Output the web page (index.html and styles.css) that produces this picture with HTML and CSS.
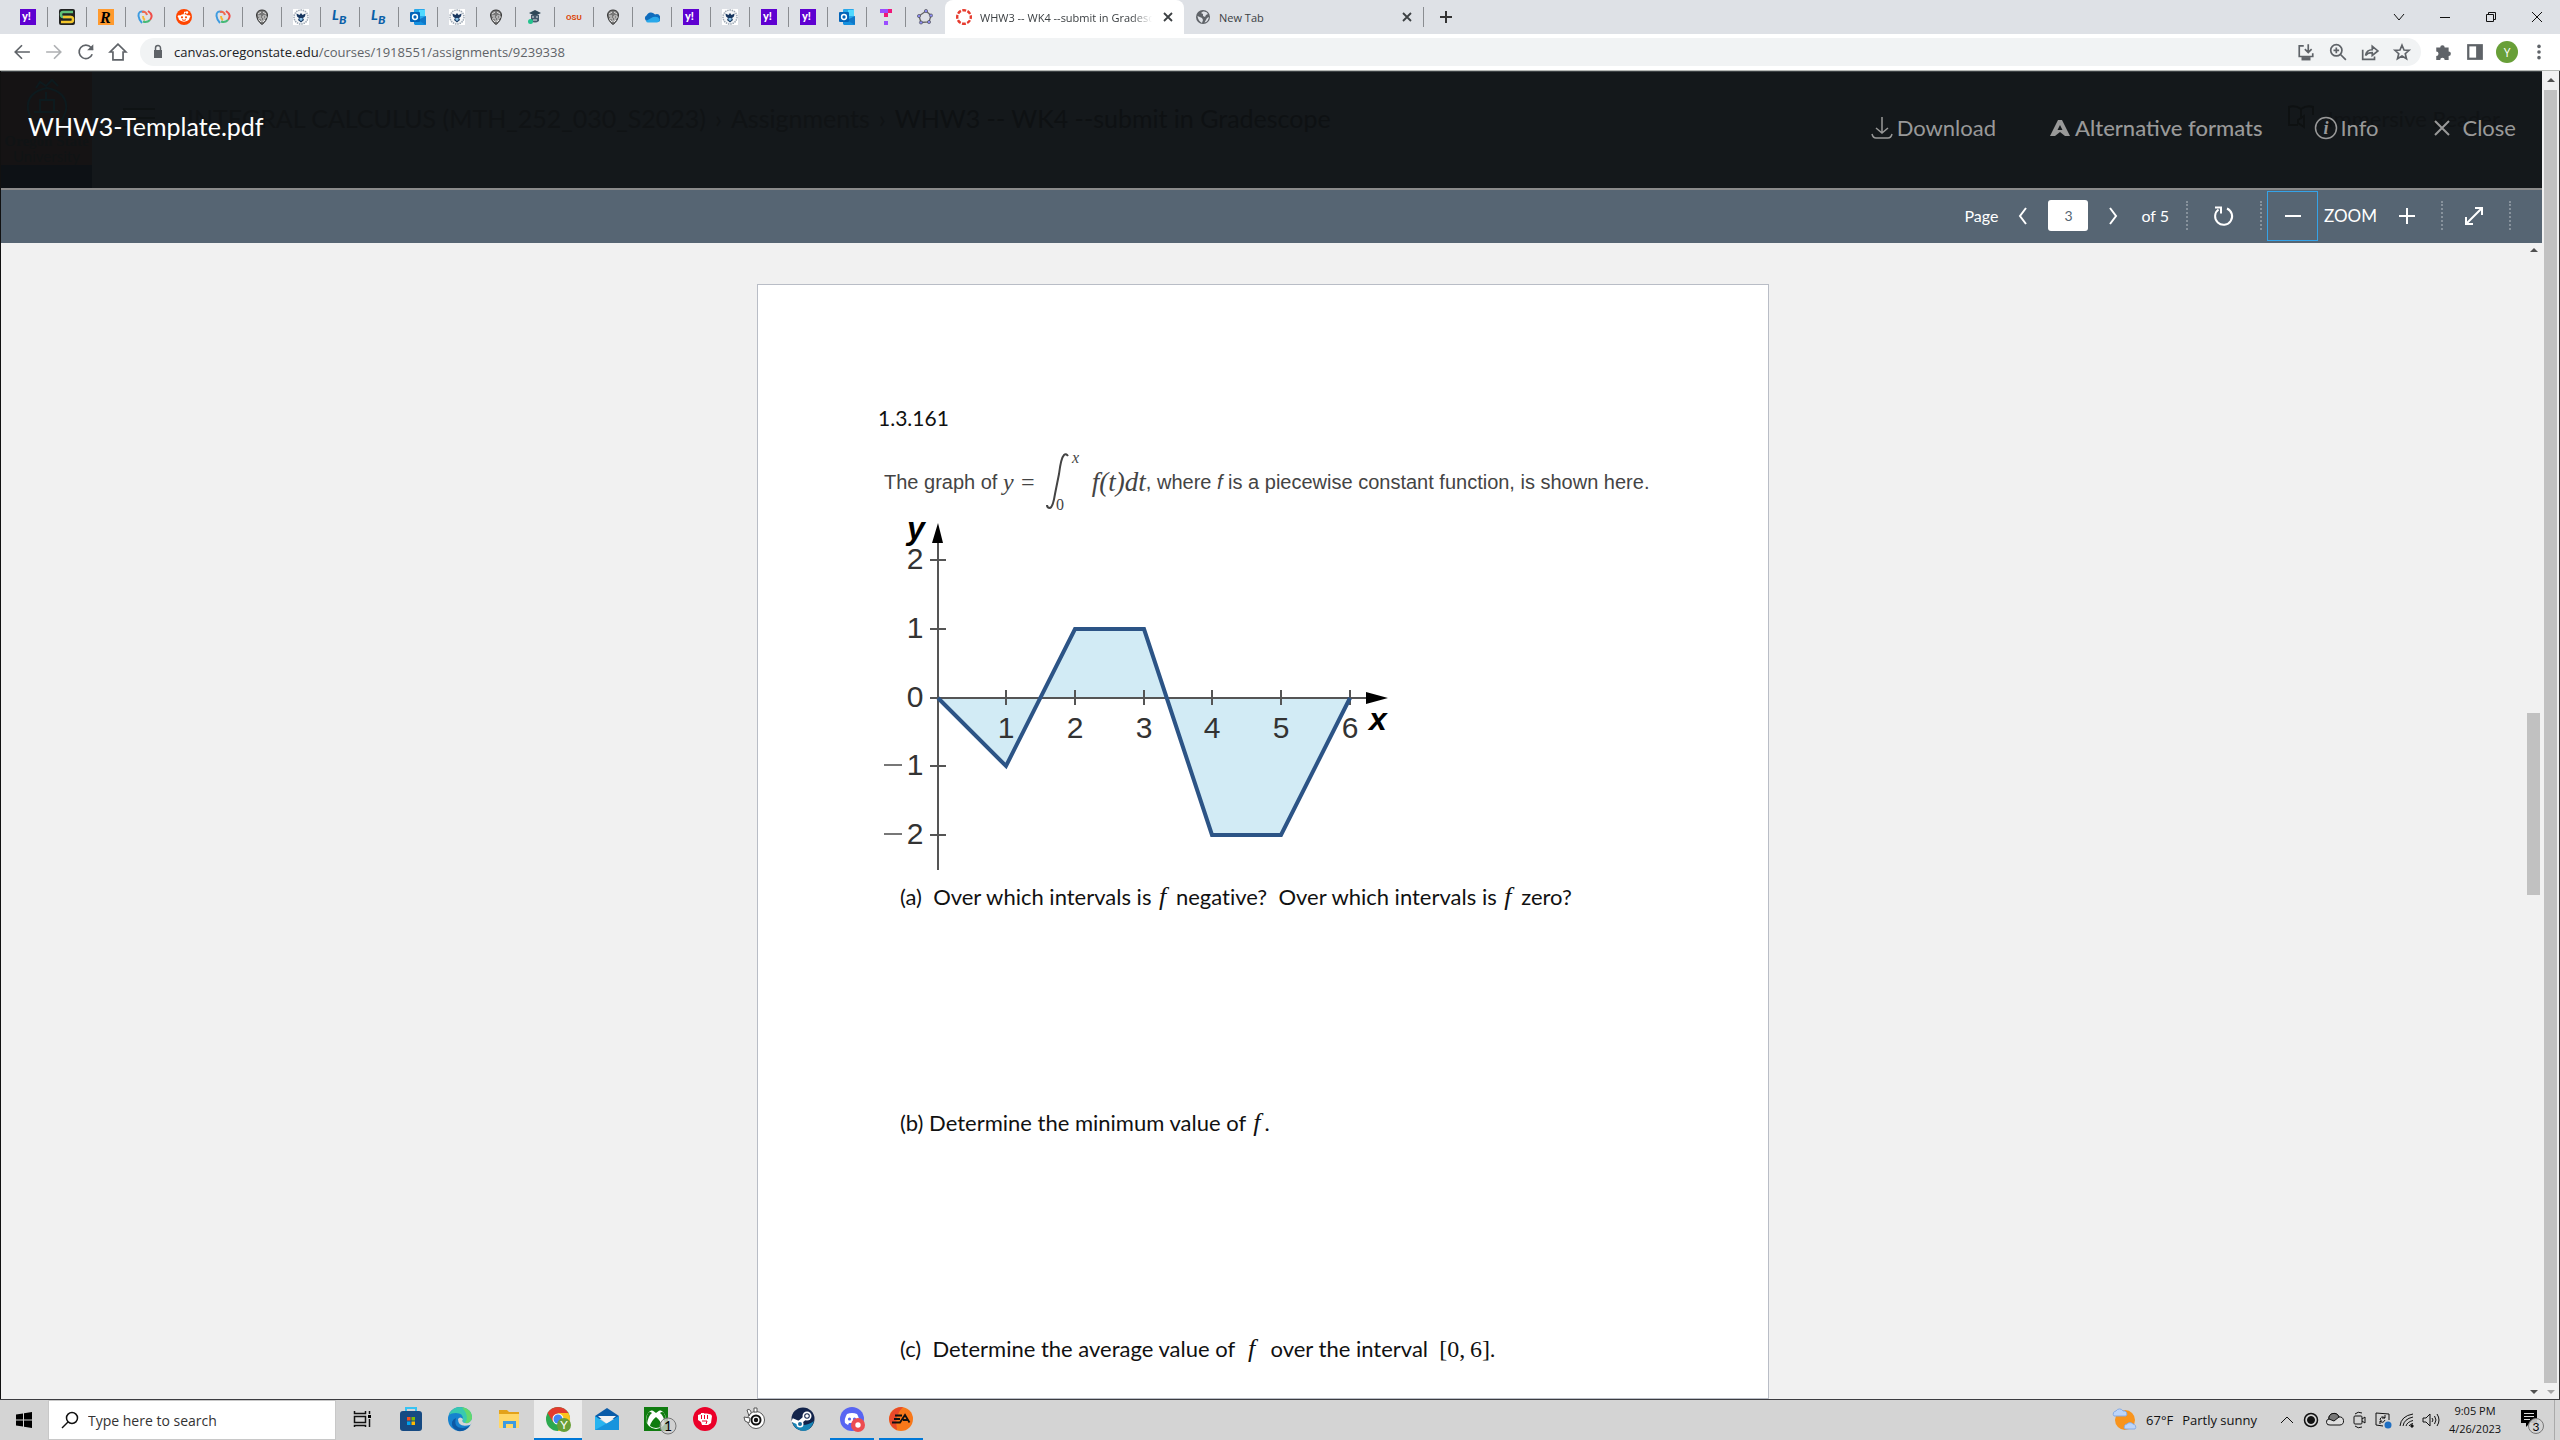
FILE: index.html
```html
<!DOCTYPE html>
<html lang="en">
<head>
<meta charset="utf-8">
<title>WHW3 -- WK4 --submit in Gradescope</title>
<link rel="stylesheet" href="styles.css">
</head>
<body>
<svg class="sprite" aria-hidden="true">
  <symbol id="f-yahoo" viewBox="0 0 16 16"><rect width="16" height="16" fill="#5f01d1"/><text x="2" y="11" class="logo-y" fill="#fff">y!</text></symbol>
  <symbol id="f-s" viewBox="0 0 16 16"><rect width="16" height="16" rx="2" fill="#222"/><path d="M14 3H4Q2 3 2 5.500T4 8H12" fill="none" stroke="#5fbf77" stroke-width="2.500"/><path d="M4 8H12Q14 8 14 10.500T12 13H2" fill="none" stroke="#f3c62c" stroke-width="2.500"/></symbol>
  <symbol id="f-r" viewBox="0 0 16 16"><rect width="16" height="16" fill="#ff9a2e"/><text x="2" y="14" class="logo-r">R</text></symbol>
  <symbol id="f-swirl" viewBox="0 0 16 16" fill="none" stroke-width="2"><path d="M8 3Q1 1 1.500 7Q2 11 5 14" stroke="#3e9be0"/><path d="M5 3Q9 2 10 6" stroke="#f0684e"/><path d="M11 2Q17 6 13 11" stroke="#ef4e4a"/><path d="M6 7Q6 10 8 11" stroke="#f7b733"/><path d="M13 11Q10 14 6 12.500" stroke="#46b978"/></symbol>
  <symbol id="f-reddit" viewBox="0 0 16 16"><circle cx="8" cy="8" r="8" fill="#ff4500"/><ellipse cx="8" cy="9" rx="5.500" ry="3.700" fill="#fff"/><circle cx="3" cy="7.500" r="1.300" fill="#fff"/><circle cx="13" cy="7.500" r="1.300" fill="#fff"/><circle cx="11" cy="3.500" r="1.200" fill="#fff"/><path d="M8 6L8.600 3L11 3.500" stroke="#fff" fill="none"/><circle cx="6" cy="8.300" r="1.100" fill="#ff4500"/><circle cx="10" cy="8.300" r="1.100" fill="#ff4500"/><path d="M6 10.700Q8 12 10 10.700" stroke="#ff4500" fill="none"/></symbol>
  <symbol id="f-crest" viewBox="0 0 16 16"><path d="M8 1Q13 1 13.500 6Q13 12 8 15.500Q3 12 2.500 6Q3 1 8 1Z" fill="#777" stroke="#333"/><path d="M4 5L7 3M9 3L12 5M4 7H7M9 7H12V9H9ZM5 9V11L7 13V9ZM9 11H11L9 13Z" stroke="#eee" fill="#333" stroke-width=".9"/></symbol>
  <symbol id="f-eagle" viewBox="0 0 16 16"><rect width="16" height="16" fill="#fff"/><circle cx="8" cy="8" r="7" fill="#f4f6f8" stroke="#9fa9b5" stroke-width="1.500" stroke-dasharray="1.500 .8"/><path d="M3.500 4.500L6.500 6L8 4L9.500 6L12.500 4.500Q12.500 8 10 9L11 11L8 13.500L5 11L6 9Q3.500 8 3.500 4.500Z" fill="#17365f"/><path d="M6.500 9H9.500V11L8 12L6.500 11Z" fill="#8ac1e6"/></symbol>
  <symbol id="f-lb" viewBox="0 0 16 16"><text x="0" y="11" class="logo-lb">L</text><text x="7" y="15" class="logo-lb small">B</text></symbol>
  <symbol id="f-outlook" viewBox="0 0 16 16"><rect x="4" y="0" width="11" height="10" rx="1" fill="#28a8ea"/><rect x="9" y="1" width="6" height="6" fill="#50d9ff"/><path d="M4 8L10 12L16 7V15Q16 16 15 16H5L4 15Z" fill="#1490df"/><path d="M16 7V16L8 11Z" fill="#0f78c8"/><rect x="0" y="3" width="10" height="10" rx="1" fill="#0364b8"/><circle cx="5" cy="8" r="2.400" fill="none" stroke="#fff" stroke-width="1.500"/></symbol>
  <symbol id="f-grad" viewBox="0 0 16 16"><path d="M2 4L8 1L14 4L8 7Z" fill="#2f4858"/><path d="M4 6H12V12Q8 15 4 12Z" fill="#44596b"/><path d="M5 8H7M9 8H11M6 11H10" stroke="#dfe6ea"/><circle cx="3.500" cy="12.500" r="2.500" fill="#23c38e"/></symbol>
  <symbol id="f-osu" viewBox="0 0 16 16"><text x="0" y="11" class="logo-osu">OSU</text></symbol>
  <symbol id="f-cloud" viewBox="0 0 16 16"><path d="M3 12A3 3 0 0 1 2.500 6.500A5 5 0 0 1 11 5.500A4 4 0 0 1 14 13H3Z" fill="#0f6cbd"/><path d="M2 12L9 8Q14 7 15.500 10Q16.500 13 13 13.500H4Q2.500 13.500 2 12Z" fill="#28a8ea"/></symbol>
  <symbol id="f-t" viewBox="0 0 16 16"><rect x="2" width="8" height="4" fill="#9a4dff"/><rect x="10" width="4" height="4" fill="#f0187a"/><rect x="6" y="4" width="4" height="4" fill="#f0187a"/><rect x="6" y="12" width="4" height="4" fill="#9a4dff"/></symbol>
  <symbol id="f-penta" viewBox="0 0 16 16"><path d="M9 2L14 6.500L12 13L4 13.500L2 7Z" fill="none" stroke="#666" stroke-width="1.300"/><g fill="#8d8df5" stroke="#444" stroke-width=".6"><circle cx="9" cy="2" r="1.600"/><circle cx="14" cy="6.500" r="1.600"/><circle cx="12" cy="13" r="1.600"/><circle cx="4" cy="13.500" r="1.600"/><circle cx="2" cy="7" r="1.600"/></g></symbol>
  <symbol id="f-canvas" viewBox="0 0 16 16"><circle cx="8" cy="8" r="6.800" fill="none" stroke="#e63b2e" stroke-width="2.400" stroke-dasharray="3.900 1.440" stroke-dashoffset="1.950"/></symbol>
  <symbol id="f-globe" viewBox="0 0 16 16"><circle cx="8" cy="8" r="7" fill="#5f6368"/><path d="M8 2.500Q12 2 13 5L11 6L10 8L8 7V5L6 4ZM2.500 7L7 9L8 11L7 14Q3 12 2.500 7ZM12 9L14 8Q13 13 9.500 13.500Z" fill="#dee1e6"/></symbol>
  <symbol id="i-x" viewBox="0 0 16 16"><path d="M4 4L12 12M12 4L4 12" stroke="currentColor" stroke-width="1.800" fill="none"/></symbol>
</svg>

<nav class="tabs" aria-label="Tabs">
  <div class="pinned">
    <svg><use href="#f-yahoo"/></svg><svg><use href="#f-s"/></svg><svg><use href="#f-r"/></svg><svg><use href="#f-swirl"/></svg><svg><use href="#f-reddit"/></svg><svg><use href="#f-swirl"/></svg><svg><use href="#f-crest"/></svg><svg><use href="#f-eagle"/></svg><svg><use href="#f-lb"/></svg><svg><use href="#f-lb"/></svg><svg><use href="#f-outlook"/></svg><svg><use href="#f-eagle"/></svg><svg><use href="#f-crest"/></svg><svg><use href="#f-grad"/></svg><svg><use href="#f-osu"/></svg><svg><use href="#f-crest"/></svg><svg><use href="#f-cloud"/></svg><svg><use href="#f-yahoo"/></svg><svg><use href="#f-eagle"/></svg><svg><use href="#f-yahoo"/></svg><svg><use href="#f-yahoo"/></svg><svg><use href="#f-outlook"/></svg><svg><use href="#f-t"/></svg><svg><use href="#f-penta"/></svg>
  </div>
  <div class="tab active"><svg class="fav"><use href="#f-canvas"/></svg><span class="tab-title">WHW3 -- WK4 --submit in Gradescope</span><button aria-label="Close tab"><svg class="fav"><use href="#i-x"/></svg></button></div>
  <div class="tab"><svg class="fav"><use href="#f-globe"/></svg><span class="tab-title">New Tab</span><button aria-label="Close tab"><svg class="fav"><use href="#i-x"/></svg></button></div>
  <button class="new-tab" aria-label="New tab"><svg width="16" height="16" viewBox="0 0 16 16"><path d="M8 2V14M2 8H14" stroke="#333" stroke-width="2"/></svg></button>
  <div class="win">
    <button aria-label="Search tabs"><svg width="12" height="12" viewBox="0 0 12 12"><path d="M1 3L6 9L11 3"/></svg></button>
    <button aria-label="Minimize"><svg width="12" height="12" viewBox="0 0 12 12"><path d="M1 6.500H11"/></svg></button>
    <button aria-label="Restore"><svg width="12" height="12" viewBox="0 0 12 12"><path d="M1.500 3.500H8.500V10.500H1.500ZM3.500 3.500V1.500H10.500V8.500H8.500"/></svg></button>
    <button aria-label="Close"><svg width="12" height="12" viewBox="0 0 12 12"><path d="M1 1L11 11M11 1L1 11"/></svg></button>
  </div>
</nav>

<div class="bar">
  <div class="nav-buttons">
    <button aria-label="Back"><svg viewBox="0 0 16 16"><path d="M15 8H2M8 2L2 8L8 14"/></svg></button>
    <button aria-label="Forward" class="off"><svg viewBox="0 0 16 16"><path d="M1 8H14M8 2L14 8L8 14"/></svg></button>
    <button aria-label="Reload"><svg viewBox="0 0 16 16"><path d="M13.500 10A6 6 0 1 1 12.500 4L14 6"/><path d="M14.500 1V6.500H9Z" fill="#5f6368" stroke="none"/></svg></button>
    <button aria-label="Home"><svg viewBox="0 0 16 16"><path d="M8 1L1 8H3.500V15H12.500V8H15Z"/></svg></button>
  </div>
  <div class="address">
    <svg class="lock" width="16" height="16" viewBox="0 0 16 16"><rect x="4" y="6" width="8" height="8" fill="#5f6368"/><path d="M5.500 6V4A2.500 2.500 0 0 1 10.500 4V6" fill="none" stroke="#5f6368" stroke-width="1.500"/></svg>
    <span class="url"><b>canvas.oregonstate.edu</b>/courses/1918551/assignments/9239338</span>
    <span class="address-tools">
      <button aria-label="Install"><svg viewBox="0 0 16 16"><path d="M6 2.500H2V12H14V9M10 1V8M7 5.500L10 8.500L13 5.500"/><path d="M4 14H12" stroke-width="3"/></svg></button>
      <button aria-label="Zoom"><svg viewBox="0 0 16 16"><circle cx="6.500" cy="6.500" r="5"/><path d="M10 10L15 15M4 6.500H9M6.500 4V9"/></svg></button>
      <button aria-label="Share"><svg viewBox="0 0 16 16"><path d="M1.500 6V14.500H12V12M4 11Q5 6 10 6V3L15 7L10 11V8.500Q6 8.500 4 11Z"/></svg></button>
      <button aria-label="Bookmark"><svg viewBox="0 0 16 16"><path d="M8 2L9.800 6.200L14.300 6.500L10.900 9.500L12 14L8 11.500L4 14L5.100 9.500L1.700 6.500L6.200 6.200Z"/></svg></button>
    </span>
  </div>
  <div class="bar-tools">
    <button aria-label="Extensions"><svg viewBox="0 0 16 16"><path d="M2 4H5.500A2 2 0 1 1 9.500 4H13V7.500A2 2 0 1 1 13 11.500V15H9.500A2 2 0 0 0 5.500 15H2V11.500A2 2 0 0 0 2 7.500Z" fill="#5f6368" stroke="none"/></svg></button>
    <button aria-label="Side panel"><svg viewBox="0 0 16 16"><rect x="2" y="2" width="12" height="12" stroke-width="2"/><rect x="9" y="2" width="5" height="12" fill="#5f6368" stroke="none"/></svg></button>
    <button class="avatar" aria-label="Profile">Y</button>
    <button aria-label="Menu"><svg viewBox="0 0 16 16"><g fill="#5f6368" stroke="none"><circle cx="8" cy="3" r="1.600"/><circle cx="8" cy="8" r="1.600"/><circle cx="8" cy="13" r="1.600"/></g></svg></button>
  </div>
</div>

<div class="content">
  <main class="preview">
    <header class="head">
      <div class="under" aria-hidden="true">
        <div class="brand"><svg width="42" height="56" viewBox="0 0 42 56"><path d="M21 10Q42 14 40 32Q36 48 21 52Q6 48 2 32Q0 14 21 10ZM10 10L14 4L20 8L26 2L32 8M8 34H34M14 34V22H28V34M20 22V14" fill="none" stroke="#0d1a1e" stroke-width="2"/></svg><strong>Oregon State</strong><span>University</span></div>
        <svg class="burger" width="32" height="24" viewBox="0 0 32 24"><path d="M0 3H32M0 12H32M0 21H32" stroke="#0f1314" stroke-width="2"/></svg>
        <span class="crumb">INTEGRAL CALCULUS (MTH_252_030_S2023)</span><span class="crumb chev">›</span><span class="crumb">Assignments</span><span class="crumb chev">›</span><span class="crumb last">WHW3 -- WK4 --submit in Gradescope</span>
        <span class="reader"><svg width="26" height="24" viewBox="0 0 26 24"><path d="M13 4Q7 0 1 2V20H10M13 4Q19 0 25 2V10M13 4V14M10 15L16 11V22L10 18Z" fill="none" stroke="#0e1112" stroke-width="2"/></svg>Immersive Reader</span>
      </div>
      <h1>WHW3-Template.pdf</h1>
      <div class="actions">
        <a href="#" class="download"><svg width="24" height="24" viewBox="0 0 24 24"><path d="M12 1V17M6 12L12 17L18 12M2 18Q3 22 6 22H18Q21 22 22 18"/></svg>Download</a>
        <a href="#" class="alt"><svg width="24" height="24" viewBox="0 0 24 24"><path d="M10 4H14L22 20H17L12 16L7 20H2ZM12 9L9.500 14H14.500Z" fill="#999" fill-rule="evenodd" stroke="none"/></svg>Alternative formats</a>
        <a href="#" class="info"><svg width="24" height="24" viewBox="0 0 24 24"><circle cx="12" cy="12" r="10.500"/><text x="12" y="18" class="info-i" text-anchor="middle">i</text></svg>Info</a>
        <button class="close"><svg width="16" height="16" viewBox="0 0 16 16"><path d="M1 1L15 15M15 1L1 15" stroke-width="2"/></svg>Close</button>
      </div>
    </header>

    <div class="tools">
      <label for="page-no">Page</label>
      <button class="step" aria-label="Previous page"><svg width="12" height="18" viewBox="0 0 12 18"><path d="M9 1L3 9L9 17"/></svg></button>
      <input id="page-no" type="text" value="3">
      <button class="step" aria-label="Next page"><svg width="12" height="18" viewBox="0 0 12 18"><path d="M3 1L9 9L3 17"/></svg></button>
      <span class="total">of 5</span>
      <button class="rotate" aria-label="Rotate"><svg width="22" height="22" viewBox="0 0 22 22"><path d="M14 3.500A8.500 8.500 0 1 1 5.500 4.500M2 2.500H8V8.500"/></svg></button>
      <button class="minus" aria-label="Zoom out"><svg width="16" height="16" viewBox="0 0 16 16"><path d="M0 8H16"/></svg></button>
      <span class="zoom">ZOOM</span>
      <button class="plus" aria-label="Zoom in"><svg width="16" height="16" viewBox="0 0 16 16"><path d="M0 8H16M8 0V16"/></svg></button>
      <button class="full" aria-label="Full screen"><svg width="20" height="20" viewBox="0 0 20 20"><path d="M2 18L18 2M11 2H18V9M2 11V18H9"/></svg></button>
    </div>

    <div class="viewer">
      <article class="sheet">
        <p class="number">1.3.161</p>
        <p class="formula">The graph of <span class="m">y =</span><svg class="integral" width="40" height="64" viewBox="0 0 40 64"><path d="M26 6Q24 3 22 5Q19 8 17 24L13 44Q11 57 8 58Q5 58 5 55" fill="none" stroke="#444" stroke-width="2"/><text x="30" y="13" class="lim it">x</text><text x="14" y="60" class="lim">0</text></svg><i class="m big">f(t)dt</i><span>, where <i>f</i> is a piecewise constant function, is shown here.</span></p>
        <svg class="plot" width="520" height="364" viewBox="878 512 520 364" role="img" aria-label="Graph of y against x">
          <path d="M938 698L1006 766L1041 698L1075 629H1144L1167 698L1212 835H1281L1350 698Z" fill="#d2ebf5"/>
          <path d="M938 530V870M930 698H1370M930 560H946M930 629H946M930 766H946M930 835H946M1006 690V705M1075 690V705M1144 690V705M1212 690V705M1281 690V705M1350 690V705" fill="none" stroke="#555" stroke-width="2"/>
          <path d="M938 698L1006 766L1075 629H1144L1212 835H1281L1350 698" fill="none" stroke="#2c5486" stroke-width="4"/>
          <path d="M938 523L943 543H932ZM1388 698L1366 692V704Z" fill="#000"/>
          <g class="ticks"><text x="915" y="569">2</text><text x="915" y="638">1</text><text x="915" y="707">0</text><text x="915" y="775">1</text><text x="915" y="844">2</text><text x="1006" y="738">1</text><text x="1075" y="738">2</text><text x="1144" y="738">3</text><text x="1212" y="738">4</text><text x="1281" y="738">5</text><text x="1350" y="738">6</text></g>
          <path d="M884 765H902M884 834H902" stroke="#777" stroke-width="2"/>
          <g class="axis"><text x="916" y="539">y</text><text x="1378" y="730">x</text></g>
        </svg>
        <p class="q">(a)&nbsp; Over which intervals is <i>f</i> negative?&nbsp; Over which intervals is <i>f</i> zero?</p>
        <p class="q">(b) Determine the minimum value of <i>f</i>.</p>
        <p class="q">(c)&nbsp; Determine the average value of &nbsp;<i>f</i>&nbsp; over the interval &nbsp;<span class="set">[0,&#8201;6]</span>.</p>
      </article>
      <div class="scroll inner" aria-hidden="true"><i class="up-arrow"></i><span class="gap-a"></span><span class="thumb"></span><span class="gap-b"></span><i class="down-arrow"></i></div>
    </div>
  </main>
  <div class="scroll outer" aria-hidden="true"><i class="up-arrow"></i><span class="thumb"></span><i class="down-arrow pale"></i></div>
</div>

<footer class="taskbar">
  <button class="start" aria-label="Start"><svg width="16" height="16" viewBox="0 0 16 16"><path d="M0 2.500L7 1.500V7.500H0ZM8 1.300L16 0V7.500H8ZM0 8.500H7V14.500L0 13.500ZM8 8.500H16V16L8 14.700Z"/></svg></button>
  <label class="search"><svg width="18" height="18" viewBox="0 0 18 18"><circle cx="11" cy="7" r="5.500"/><path d="M7 11L1 17"/></svg><input type="text" placeholder="Type here to search" aria-label="Search"></label>
  <div class="apps">
    <button aria-label="Task view"><svg viewBox="0 0 24 24"><path d="M4.500 4V6.500H15.500V4M4.500 9.500H15.500V15.500H4.500ZM4.500 20V18.500H15.500V20M19.500 4V7M19.500 12V20" fill="none" stroke="#111" stroke-width="1.500"/><path d="M18 8H21V11H18Z"/></svg></button>
    <button aria-label="Store"><svg viewBox="0 0 24 24"><path d="M7 5V1H17V5" fill="none" stroke="#37c3f3" stroke-width="2"/><rect x="1" y="4" width="22" height="20" rx="3" fill="#164a82"/><path d="M8 10H11.500V13.500H8Z" fill="#f25022"/><path d="M12.500 10H16V13.500H12.500Z" fill="#7fba00"/><path d="M8 14.500H11.500V18H8Z" fill="#00a4ef"/><path d="M12.500 14.500H16V18H12.500Z" fill="#ffb900"/></svg></button>
    <button aria-label="Edge"><svg viewBox="0 0 24 24"><circle cx="12" cy="12" r="12" fill="#1682cf"/><path d="M1 8Q4 0 12 0Q24 1 24 11Q23 17 17 16Q13 15 15 12Q15 6 8 6Q3 6 1 8Z" fill="#38c9b0"/><path d="M14 0Q24 2 24 11Q23 17 17 16Q22 10 14 0Z" fill="#64d86b"/><path d="M8 11Q5 21 15 21Q19 21 22 18Q18 25 10 24Q3 21 4 15Q5 12 8 11Z" fill="#0c59a4"/><path d="M15 12Q13 15 17 16Q22 17 24 12Q25 16 22 18Q10 21 10 12Q12 9 15 12Z" fill="#d5d5d5"/></svg></button>
    <button aria-label="File Explorer"><svg viewBox="0 0 24 24"><path d="M2 3H10L12 5H22V21H2Z" fill="#e3a21a"/><path d="M2 7H22V21H2Z" fill="#ffd767"/><path d="M6 21V14H19V21H16V17H9V21Z" fill="#3d9be0"/></svg></button>
    <button aria-label="Chrome" class="current"><svg viewBox="0 0 24 24"><circle cx="12" cy="12" r="12" fill="#2da94f"/><path d="M1.600 6A12 12 0 0 1 22.400 6H12L7 15Z" fill="#e33b2e"/><path d="M22.400 6A12 12 0 0 1 12 24L17 14L12 6Z" fill="#fcc31e"/><circle cx="12" cy="12" r="5.500" fill="#fff"/><circle cx="12" cy="12" r="4.500" fill="#4285f4"/><circle cx="18" cy="18" r="7" fill="#689f38"/><text x="18" y="22" class="mini" fill="#fff" text-anchor="middle">Y</text></svg></button>
    <button aria-label="Mail"><svg viewBox="0 0 24 24"><path d="M0 9L12 1L24 9V12H0Z" fill="#0b5ca8"/><path d="M3 9H21L12 17Z" fill="#f3f3f3"/><path d="M0 9L12 17L24 9V23H0Z" fill="#28b4f0"/><path d="M0 23L16 14L24 9V23Z" fill="#1794dd"/></svg></button>
    <button aria-label="Xbox"><svg viewBox="0 0 24 24"><rect width="24" height="24" fill="#107c10"/><circle cx="12" cy="12" r="10" fill="#fff"/><path d="M6 3Q9 3 12 6Q15 3 18 3L15 1H9ZM8 6Q4 9 3 17Q1 12 4 6Q6 4 8 6ZM16 6Q20 9 21 17Q23 12 20 6Q18 4 16 6ZM12 10Q17 14 18 19Q12 23 6 19Q7 14 12 10Z" fill="#107c10"/><circle cx="24" cy="19" r="8" fill="#cfcfcf" fill-opacity=".8" stroke="#777"/><text x="24" y="24" class="mini one" text-anchor="middle">1</text></svg></button>
    <button aria-label="Riot"><svg viewBox="0 0 24 24"><circle cx="12" cy="12" r="12" fill="#eb0029"/><path d="M5 8L8 7V6H11V6.500H14L18 7.500L19 9L18 16L15 18H9L8 15L5 13Z" fill="#fff"/><path d="M8.500 8V12M11.500 8V12M14.500 8V12M9 14H14L13 17" stroke="#eb0029" fill="none"/></svg></button>
    <button aria-label="SteelSeries"><svg viewBox="0 0 24 24"><circle cx="14" cy="13" r="8.500" fill="#fff" stroke="#555"/><path d="M2 10L8 11L7 16L3 14ZM5 3A2 2 0 1 1 8 7L7 9ZM12 1H15V5H12Z" fill="#fff" stroke="#555"/><circle cx="14" cy="13" r="5.500" fill="#111"/><circle cx="14" cy="13" r="3.500" fill="#fff"/><circle cx="14" cy="13" r="2.200" fill="#111"/></svg></button>
    <button aria-label="Steam"><svg viewBox="0 0 24 24"><circle cx="12" cy="12" r="11.500" fill="#12234a"/><path d="M1 14Q12 22 23 14Q20 24 12 24Q3 23 1 14Z" fill="#1785b6"/><path d="M1 13L8 16L15 10" stroke="#fff" stroke-width="4" fill="none"/><circle cx="16" cy="9" r="4.500" fill="#fff"/><circle cx="16" cy="9" r="2.800" fill="#12234a"/><circle cx="16" cy="9" r="1.800" fill="#fff"/><circle cx="9" cy="17" r="3.500" fill="#fff"/><circle cx="9" cy="17" r="2" fill="#176a9b"/></svg></button>
    <button aria-label="Discord" class="open"><svg viewBox="0 0 24 24"><circle cx="12" cy="12" r="12" fill="#5865f2"/><path d="M7 7Q12 5 17 7Q20 12 19 16L16 18L15 16H9L8 18L5 16Q4 12 7 7Z" fill="#fff"/><circle cx="9.500" cy="12" r="1.600" fill="#5865f2"/><circle cx="14.500" cy="12" r="1.600" fill="#5865f2"/><circle cx="18" cy="18" r="7" fill="#ed4c50"/><circle cx="18" cy="18" r="2.700" fill="#fff"/></svg></button>
    <button aria-label="EA" class="open"><svg viewBox="0 0 24 24"><circle cx="12" cy="12" r="12" fill="#f8781a"/><path d="M0 12Q2 0 14 0Q5 8 8 23Q1 20 0 12Z" fill="#e8492a"/><path d="M6 8.500H13M5 12H11M3 15.500H11L16 8L20.500 15.500M14 13H18" stroke="#111" stroke-width="1.800" fill="none"/></svg></button>
  </div>
  <div class="tray">
    <button class="weather"><svg width="24" height="24" viewBox="0 0 24 24"><circle cx="12" cy="12" r="10" fill="#f8941d"/><path d="M1 8A3 3 0 0 1 3 3A4 4 0 0 1 10 3A3 3 0 0 1 13 8ZM12 21A3 3 0 0 1 14 16A4 4 0 0 1 20 16A3 3 0 0 1 22 21Z" fill="#bcd5fa" stroke="#86abe6"/></svg><span>67°F</span><span>Partly sunny</span></button>
    <div class="tray-icons">
      <svg viewBox="0 0 18 18"><path d="M3 12L9 6L15 12"/></svg>
      <svg viewBox="0 0 18 18"><circle cx="9" cy="9" r="6.500" stroke-width="1.500"/><circle cx="9" cy="9" r="3.500" fill="#111"/></svg>
      <svg viewBox="0 0 18 18"><path d="M4 14A3 3 0 0 1 3 8A5 4.500 0 0 1 13 6A4 4 0 0 1 14 14Z" fill="#ddd"/><path d="M3 8A5 4.500 0 0 1 13 6L8 10Z" fill="#777"/></svg>
      <svg viewBox="0 0 18 18"><rect x="4" y="5" width="8" height="8" rx="1"/><path d="M12 8L15 6V12L12 10M5 3Q8 0 12 2M5 15Q8 18 12 16"/></svg>
      <svg viewBox="0 0 18 18"><path d="M15 9V3L2 2V14L9 15M6 9Q7 4 11 7M11 4V7H8M11 9Q9 13 6 10M6 13V10H8"/><circle cx="14" cy="14" r="3.500" fill="#1f6fc2" stroke="none"/></svg>
      <svg viewBox="0 0 18 18"><path d="M2 15Q3 5 15 3M5 15Q6 8 15 6M8 15Q9 11 15 9.500M11 15Q12 13 15 12.500"/><circle cx="14" cy="15" r="1.200" fill="#111"/></svg>
      <svg viewBox="0 0 18 18"><path d="M1 7H4L8 3V15L4 11H1ZM10 7Q12 9 10 11M12.500 5Q15.500 9 12.500 13M15 3Q19 9 15 15"/></svg>
    </div>
    <div class="clock"><time>9:05 PM</time><time>4/26/2023</time></div>
    <button class="notes" aria-label="Notifications"><svg width="28" height="28" viewBox="0 0 28 28"><path d="M3 4H19V17H12L8 21V17H3Z"/><path d="M6 7.500H16M6 10.500H16M6 13.500H12" stroke="#ddd"/><circle cx="18" cy="20" r="7.500" fill="#d4d4d4" fill-opacity=".9" stroke="#777"/><text x="18" y="25" class="mini" text-anchor="middle">3</text></svg></button>
  </div>
</footer>
</body>
</html>
```
FILE: styles.css
```css
* { box-sizing: border-box; }
body { margin: 0; height: 100vh; display: flex; flex-direction: column; overflow: hidden; font-family: "Open Sans", "Noto Sans", sans-serif; background: #f1f1f1; color: #111; }
button { border: 0; padding: 0; background: none; font: inherit; color: inherit; display: flex; align-items: center; justify-content: center; }
a { color: inherit; text-decoration: none; }
h1, p { margin: 0; font-weight: 400; }
svg { display: block; flex: none; overflow: visible; }
.sprite { display: none; }

/* Logo lettering */
.logo-y { font: 900 11px Lato, sans-serif; }
.logo-r { font: italic 900 16px "Liberation Serif", serif; }
.logo-lb { font: italic 900 14px Lato, sans-serif; fill: #0b60a8; }
.logo-lb.small { font-size: 12px; }
.logo-osu { font: 700 8px Roboto, sans-serif; fill: #dc4405; }
.mini { font: 12px Lato, sans-serif; }
.mini.one { font-size: 14px; }

/* Tab strip */
.tabs { flex: none; height: 34px; display: flex; align-items: center; background: #dee1e6; padding-left: 9px; }
.pinned { display: flex; }
.pinned svg { width: 16px; height: 16px; box-sizing: content-box; padding: 2px 11px; border-right: 1px solid #8a8d91; }
.pinned svg:last-child { border-right-color: transparent; }
.tab { width: 239px; height: 34px; display: flex; align-items: center; gap: 8px; padding: 0 8px 0 11px; font-size: 11px; color: #3c4043; }
.tab.active { background: #fff; border-radius: 8px 8px 0 0; }
.tab-title { flex: 1; overflow: hidden; white-space: nowrap; }
.active .tab-title { mask-image: linear-gradient(90deg, #000 88%, transparent); }
.fav { width: 16px; height: 16px; }
.new-tab { width: 44px; height: 20px; border-left: 1px solid #8a8d91; }
.win { margin-left: auto; display: flex; }
.win button { width: 46px; height: 28px; }
.win svg { fill: none; stroke: #111; }

/* Address bar */
.bar { flex: none; height: 37px; display: flex; align-items: center; background: #fff; border-bottom: 1px solid #b5b8b5; padding: 0 5px 0 6px; }
.bar button svg { width: 18px; height: 18px; fill: none; stroke: #5f6368; stroke-width: 1.500; }
.nav-buttons { display: flex; }
.nav-buttons button { width: 32px; height: 28px; }
.nav-buttons .off { opacity: .5; }
.address { flex: 1; height: 28px; margin: 0 6px; display: flex; align-items: center; gap: 8px; padding: 0 3px 0 10px; border-radius: 14px; background: #f1f3f4; }
.url { font-size: 13px; color: #5f6368; }
.url b { font-weight: 400; color: #202124; }
.address-tools, .bar-tools { display: flex; margin-left: auto; }
.address-tools button, .bar-tools button { width: 32px; height: 28px; }
.bar-tools { margin-left: 0; }
.bar-tools .avatar { width: 22px; height: 22px; margin: 3px 5px; border-radius: 50%; background: #689f38; color: #fff; font-size: 12px; }

.content { flex: 1; min-height: 0; display: flex; border-bottom: 1px solid #3c3c40; }
.preview { flex: 1; min-width: 0; display: flex; flex-direction: column; border-left: 1px solid #111; }

/* File header */
.head { position: relative; flex: none; height: 119px; display: flex; align-items: center; justify-content: space-between; padding: 0 26px 0 27px; background: #14181b; border-top: 1px solid #3c4144; border-bottom: 2px solid #8b8b8b; font-family: Lato, sans-serif; overflow: hidden; }
.head h1 { position: relative; font-size: 25px; padding-bottom: 8px; color: #fff; }
.under { position: absolute; inset: 0; display: flex; align-items: center; color: #101315; font-size: 25px; padding: 0 42px 24px 0; }
.brand { width: 91px; height: 117px; align-self: flex-start; display: flex; flex-direction: column; align-items: center; font-size: 15px; line-height: 15px; background: linear-gradient(#151314 93px, #0d1115 93px); padding-top: 6px; }
.brand strong { font-family: "Liberation Serif", serif; }
.burger { margin: 0 32px 0 31px; }
.chev { padding: 0 9px; }
.crumb.last { color: #0e1113; }
.reader { margin-left: auto; display: flex; gap: 14px; font-size: 22px; }
.actions { position: relative; display: flex; align-items: center; font-size: 22px; color: #999; padding-bottom: 5px; }
.actions a, .actions button { display: flex; align-items: center; gap: 3px; }
.actions svg { fill: none; stroke: #999; stroke-width: 1.500; }
.actions .alt { margin-left: 52px; font-weight: 500; }
.actions .info { margin-left: 51px; }
.actions .close { margin-left: 56px; gap: 12px; }
.info-i { font: italic 700 18px "Liberation Serif", serif; fill: #999; stroke: none; }

/* Page tools */
.tools { flex: none; height: 53px; display: flex; align-items: center; justify-content: flex-end; background: #566573; color: #fff; font: 16px Lato, sans-serif; padding: 0 31px 2px 0; }
.tools svg { fill: none; stroke: #fff; stroke-width: 2; }
.tools .step { width: 50px; height: 30px; }
.tools input { width: 40px; height: 31px; border: 0; border-radius: 3px; text-align: center; color: #566573; font: 14px Lato, sans-serif; }
.total { padding: 0 17px 0 3px; }
.rotate { width: 76px; height: 29px; border: 2px dotted #87929c; border-width: 0 2px; }
.minus { width: 51px; height: 50px; margin: 0 6px 0 5px; border: 1px solid #35a3e8; }
.zoom { font-size: 17px; }
.plus { width: 64px; height: 29px; padding-right: 4px; }
.full { width: 70px; height: 29px; padding-right: 5px; border: 2px dotted #87929c; border-width: 0 2px; }

/* Document */
.viewer { flex: 1; min-height: 0; display: flex; justify-content: flex-end; overflow: hidden; background: #f1f1f1; }
.sheet { width: 1012px; margin: 41px auto 0; padding: 117px 120px 0 120px; background: #fff; border: 1px solid #b9bdc6; font-family: Lato, sans-serif; font-size: 21px; line-height: 32px; color: #111; }
.formula { display: flex; align-items: center; height: 64px; margin: 16px 0 0 6px; font: 20px "Liberation Sans", sans-serif; color: #444; white-space: pre; }
.m { font: italic 24px "Liberation Serif", serif; }
.m.big { font-size: 27px; }
.lim { font: 16px "Liberation Serif", serif; fill: #444; }
.lim.it { font-style: italic; }
.integral { margin: 0 10px 0 6px; }
.plot { margin-top: -2px; }
.ticks text { font: 30px "Liberation Sans", sans-serif; fill: #333; text-anchor: middle; }
.axis text { font: italic 700 32px "Liberation Sans", sans-serif; text-anchor: middle; }
.q { margin: 5px 0 194px 22px; height: 32px; white-space: nowrap; font-size: 22px; font-variant-ligatures: none; }
.q + .q { margin-top: 0; }
.q i { font: italic 26px "Liberation Serif", serif; line-height: 20px; padding: 0 4px 0 2px; }
.set { font: 24px "Liberation Serif", serif; line-height: 20px; }

/* Scroll bars */
.scroll { flex: none; display: flex; flex-direction: column; align-items: center; background: #f1f1f1; }
.inner { width: 17px; padding: 5px 0; }
.outer { width: 18px; padding: 7px 0 5px; border-right: 1px solid #333; }
.scroll i { width: 0; height: 0; border: 4px solid transparent; }
.up-arrow { margin-bottom: 8px; }
.scroll .up-arrow { border-bottom-color: #505050; border-top: 0; }
.scroll .down-arrow { border-top-color: #505050; border-bottom: 0; margin-top: 7px; }
.scroll .pale { border-top-color: #a3a3a3; }
.thumb { width: 13px; flex: 1; background: #c1c1c1; }
.gap-a { flex: 453; }
.inner .thumb { flex: 181; }
.gap-b { flex: 488; }

/* Taskbar */
.taskbar { flex: none; height: 40px; display: flex; align-items: center; background: #d4d4d4; font-size: 13px; }
.start { width: 48px; height: 40px; }
.search { width: 288px; height: 40px; display: flex; align-items: center; gap: 9px; padding-left: 12px; background: #fff; border: 1px solid #c8c8c8; }
.search svg { fill: none; stroke: #111; stroke-width: 1.500; }
.search input { flex: 1; min-width: 0; border: 0; padding: 0; font: 14px "Open Sans", sans-serif; background: none; }
.search input::placeholder { color: #333; opacity: 1; }
.apps { display: flex; gap: 1px; margin-left: 2px; }
.apps button { width: 48px; height: 40px; border-bottom: 2px solid transparent; }
.apps svg { width: 24px; height: 24px; }
.apps .current { background: #ececec; border-color: #0078d7; }
.apps .open { border-image: linear-gradient(90deg, transparent 8%, #0078d7 8%, #0078d7 92%, transparent 92%) 2; }
.tray { margin-left: auto; display: flex; align-items: center; }
.weather { gap: 9px; margin-right: 21px; }
.tray-icons { display: flex; gap: 6px; margin-right: 1px; }
.tray-icons svg { width: 18px; height: 18px; fill: none; stroke: #111; }
.clock { width: 68px; display: flex; flex-direction: column; align-items: center; font-size: 11px; line-height: 18px; }
.notes { width: 46px; height: 40px; border-right: 1px solid #aaa; margin-right: 5px; }
```
